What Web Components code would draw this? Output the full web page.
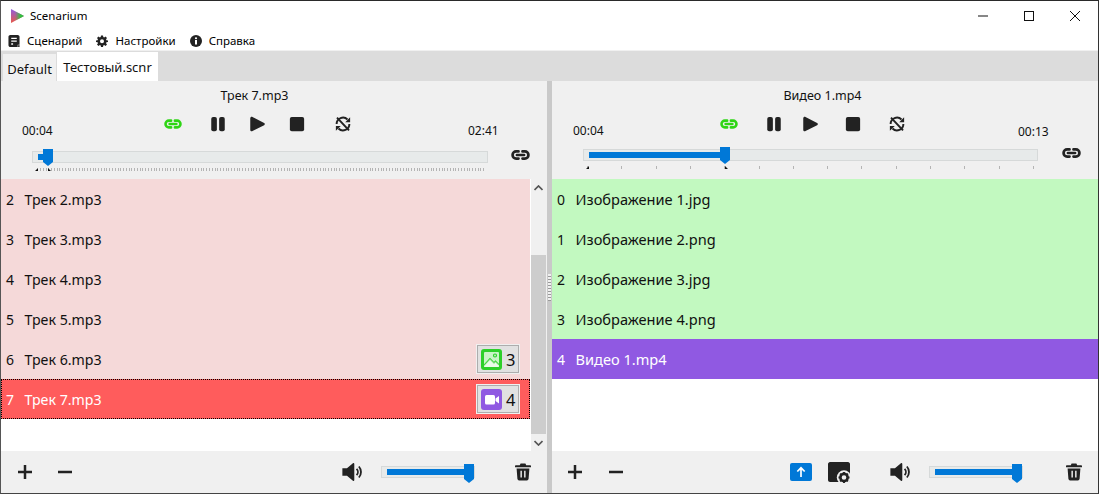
<!DOCTYPE html>
<html>
<head>
<meta charset="utf-8">
<title>Scenarium</title>
<style>
  html, body { margin: 0; height: 100%; overflow: hidden; }
  body { font-family: "Noto Sans", "Open Sans", sans-serif; color: #111; background: #f0f0f0; }
</style>
</head>
<body>
<app-window>
  <title-bar slot="title"></title-bar>
  <menu-bar slot="menu"></menu-bar>
  <tab-bar slot="tabs"></tab-bar>
  <media-panel slot="left" kind="audio"></media-panel>
  <media-panel slot="right" kind="video"></media-panel>
</app-window>

<script>
// shared icon set, 24x24 viewbox unless the markup says otherwise
const ICONS = {
  link: `<svg viewBox="0 0 24 24" fill="none" stroke="currentColor" stroke-width="3.4" stroke-linecap="round"><path d="M9.5 7.5H6.5a4.5 4.5 0 0 0 0 9h3M14.5 7.5H17.500a4.5 4.5 0 0 1 0 9h-3M7.5 12h9"/></svg>`,
  pause: `<svg viewBox="0 0 24 24" fill="currentColor"><rect x="3" y="2.5" width="7.5" height="19" rx="2.5"/><rect x="13.5" y="2.5" width="7.5" height="19" rx="2.5"/></svg>`,
  play: `<svg viewBox="0 0 24 24" fill="currentColor"><path d="M3 4.5C3 2.8 4.6 1.9 6 2.7L21.5 10.5C22.8 11.2 22.8 12.8 21.5 13.5L6 21.3C4.6 22.1 3 21.2 3 19.5Z"/></svg>`,
  stop: `<svg viewBox="0 0 24 24" fill="currentColor"><rect x="2.5" y="2.5" width="19" height="19" rx="2.5"/></svg>`,
  norepeat: `<svg viewBox="0 0 24 24" fill="none" stroke="currentColor"><path d="M3.5 12a8.500 8.500 0 0 1 14.500-6M20.500 12a8.500 8.500 0 0 1-14.500 6" stroke-width="2.600"/><path d="M21.500 3v6.500H15ZM2.500 21v-6.500H9Z" fill="currentColor" stroke="none"/><path d="M4 3.500l16 17" stroke-width="2.600"/></svg>`,
  plus: `<svg viewBox="0 0 14 14" fill="currentColor"><rect x="5.75" y="0" width="2.5" height="14"/><rect x="0" y="5.75" width="14" height="2.5"/></svg>`,
  minus: `<svg viewBox="0 0 14 14" fill="currentColor"><rect x="0" y="5.75" width="14" height="2.5"/></svg>`,
  speaker: `<svg viewBox="0 0 24 24" fill="currentColor"><path d="M1.5 8h5L13 2.5c.8-.6 1.500-.2 1.500.7v17.600c0 .9-.7 1.300-1.500.7L6.500 16h-5Z"/><path d="M17 8.500a5 5 0 0 1 0 7" fill="none" stroke="currentColor" stroke-width="2"/><path d="M19.500 6a9 9 0 0 1 0 12" fill="none" stroke="currentColor" stroke-width="2"/></svg>`,
  trash: `<svg viewBox="2 2 20 21" fill="currentColor"><path d="M9 2h6l1 2h5c.6 0 1 .4 1 1v1.500H2V5c0-.6.4-1 1-1h5Z"/><path fill-rule="evenodd" d="M4 8h16l-1 13c0 1-1 2-2 2H7c-1 0-2-1-2-2ZM8.800 11v8.500h1.800V11ZM13.400 11v8.500h1.800V11Z"/></svg>`,
  upload: `<svg viewBox="0 0 22 18"><rect width="22" height="18" rx="2" fill="#0078d7"/><path d="M11 14V5M7.300 8.500 11 4.800l3.700 3.700" fill="none" stroke="#fff" stroke-width="1.700"/></svg>`,
  folderCog: `<svg viewBox="0 0 24 23"><path d="M2 0h18c1 0 2 1 2 2v16c0 1-1 2-2 2H2c-1 0-2-1-2-2V2C0 1 1 0 2 0Z" fill="#222"/><circle cx="16" cy="15.500" r="7.200" fill="#f0f0f0"/><circle cx="16" cy="15.500" r="3.600" fill="none" stroke="#222" stroke-width="2.600"/><path d="M16 10v2M16 19v2M10.500 15.500h2M19.500 15.500h2M12.100 11.600l1.400 1.400M18.500 18l1.400 1.400M12.100 19.400l1.400-1.400M18.500 13l1.400-1.400" stroke="#222" stroke-width="1.900"/></svg>`,
  image: `<svg viewBox="0 0 21 21"><rect width="21" height="21" rx="3" fill="#2dcf2a"/><rect x="3" y="3" width="15" height="15" rx="1" fill="#c9f4c7"/><path d="M3 16.500 9 10l4 4 1.500-1.500 3.500 3.500" fill="none" stroke="#2dcf2a" stroke-width="1.600"/><path d="M3 18v-1.500L9 10l4 4 1.500-1.500 3.500 3.500V18Z" fill="#fff" opacity=".6"/><circle cx="14" cy="6.500" r="1.500" fill="none" stroke="#2dcf2a" stroke-width="1.200"/></svg>`,
  video: `<svg viewBox="0 0 21 21"><rect width="21" height="21" rx="3" fill="#9059e2"/><rect x="4" y="6" width="10" height="9.500" rx="1.500" fill="#fff"/><path d="M14.500 9.500 18 7v7.500L14.500 12Z" fill="#fff"/></svg>`,
  logo: `<svg viewBox="0 0 13 14"><defs><linearGradient id="lg" x1="0" y1="0" x2="0" y2="1"><stop offset="0" stop-color="#8f5be0"/><stop offset="1" stop-color="#e85a48"/></linearGradient><linearGradient id="lh" x1="0" y1="0" x2="1" y2="0"><stop offset=".3" stop-color="#2fc23e" stop-opacity="0"/><stop offset=".75" stop-color="#2fc23e"/></linearGradient></defs><path d="M0 0 13 7 0 14Z" fill="url(#lg)"/><path d="M0 0 13 7 0 14Z" fill="url(#lh)"/></svg>`,
  file: `<svg viewBox="0 0 12 13" fill="#222"><path fill-rule="evenodd" d="M2 0h8c1 0 2 .8 2 2v8.500h-2V13H2c-1 0-2-.8-2-2V2C0 .8 1 0 2 0ZM3 3v1.200h6V3ZM3 6v1.200h6V6ZM3 9v1.600h2V9Z"/><rect x="10.500" y="11" width="1.500" height="2"/></svg>`,
  cog: `<svg viewBox="0 0 24 24" fill="#222"><path fill-rule="evenodd" d="M10 1h4l.6 3.200 1.700.7L19 3l3 3-1.900 2.700.7 1.700L24 11v3l-3.200.6-.7 1.700L22 19l-3 3-2.700-1.900-1.700.7L14 24h-4l-.6-3.200-1.700-.7L5 22l-3-3 1.900-2.700-.7-1.700L0 14v-3l3.200-.6.700-1.700L2 6l3-3 2.700 1.900 1.700-.7ZM12 8.500a4 4 0 1 0 0 8 4 4 0 0 0 0-8Z"/></svg>`,
  info: `<svg viewBox="0 0 24 24"><circle cx="12" cy="12" r="12" fill="#222"/><rect x="10" y="10" width="4" height="9" fill="#fff"/><circle cx="12" cy="6.500" r="2.200" fill="#fff"/></svg>`
};

function defineEl(name, css, html) {
  customElements.define(name, class extends HTMLElement {
    constructor() {
      super();
      this.attachShadow({ mode: "open" });
    }
    connectedCallback() {
      const markup = typeof html === "function" ? html(this) : html;
      this.shadowRoot.innerHTML = `<style>${css}</style>${markup}`;
    }
  });
}

defineEl("app-window", `
  :host { display: grid; grid-template-rows: 29px 20px 31px 1fr; width: 1099px; height: 494px; box-sizing: border-box;
    border-top: 1px solid #2a2a2a; border-right: 1px solid #333; border-bottom: 1px solid #444; border-left: 1px solid #555; background: #f0f0f0; }
  .panes { display: grid; grid-template-columns: 546px 5px 1fr; min-height: 0; }
  .split { background: #c9c9c9; display: flex; align-items: center; justify-content: center; }
  .grip { width: 3px; height: 27px; background: repeating-linear-gradient(#f0f0f0 0 2px, #999 2px 3px); }
`, `
  <slot name="title"></slot><slot name="menu"></slot><slot name="tabs"></slot>
  <div class="panes"><slot name="left"></slot><div class="split"><div class="grip"></div></div><slot name="right"></slot></div>
`);

defineEl("title-bar", `
  :host { display: flex; align-items: center; background: #fff; height: 29px; font-size: 11.5px; padding-left: 10px; color: #000; }
  .logo { width: 13px; height: 14px; margin-right: 6px; display: flex; }
  .name { flex: 1; }
  .btn { width: 46px; height: 29px; display: flex; align-items: center; justify-content: center; }
`, () => `
  <span class="logo">${ICONS.logo}</span><span class="name">Scenarium</span>
  <span class="btn"><svg width="10" height="10"><rect x="0" y="4.500" width="10" height="1" fill="#111"/></svg></span>
  <span class="btn"><svg width="10" height="10"><rect x=".5" y=".5" width="9" height="9" fill="none" stroke="#111"/></svg></span>
  <span class="btn"><svg width="10" height="10"><path d="M0 0 10 10M10 0 0 10" stroke="#111" fill="none"/></svg></span>
`);

defineEl("menu-bar", `
  :host { display: flex; align-items: center; background: #fff; height: 20px; font-size: 11.5px; padding-left: 7px; gap: 14px; color: #000; box-sizing: border-box; padding-top: 1px; }
  .it { display: flex; align-items: center; gap: 7px; }
  .it:first-child { gap: 8px; }
  svg { width: 12px; height: 12px; display: block; }
`, () => `
  <span class="it">${ICONS.file}<span>Сценарий</span></span>
  <span class="it">${ICONS.cog}<span>Настройки</span></span>
  <span class="it">${ICONS.info}<span>Справка</span></span>
`);

defineEl("tab-bar", `
  :host { display: flex; align-items: flex-end; background: #dcdcdc; height: 30px; border-top: 1px solid #f0f0f0; padding-left: 2px; font-size: 13px; color: #111; }
  .tab { background: #f0f0f0; height: 27px; width: 53px; box-sizing: border-box; padding-top: 2px; display: flex; align-items: center; justify-content: center; margin-right: 1px; }
  .on { background: #fff; height: 29px; width: 101px; padding-top: 1px; }
`, `<div class="tab">Default</div><div class="tab on">Тестовый.scnr</div>`);

// the seek and volume sliders share this; the handle lies over the groove
defineEl("seek-slider", `
  :host { display: block; position: relative; height: 12px; flex: none; }
  .groove { position: absolute; inset: 0; box-sizing: border-box; background: #e7eaea; border: 1px solid #d6d9d9; }
  .fill { position: absolute; top: 3px; bottom: 3px; background: #0078d7; }
  svg.h { position: absolute; top: -2px; width: 10px; }
  svg.ticks { position: absolute; left: 0; top: 17px; height: 4px; width: 100%; overflow: visible; }
`, el => {
  const attr = n => +el.getAttribute(n) || 0;
  const pos = attr("pos");
  const from = attr("from");
  const w = attr("w");
  const step = attr("step");
  const hh = attr("hh") || 17;
  let ticks = "";
  if (step) {
    let lines = "";
    for (let x = attr("tick-start"); x <= attr("tick-end"); x += step) {
      lines += `<rect x="${Math.round(x)}" y="0" width="1" height="3" fill="#b4b4b4"/>`;
    }
    lines += `<path d="M${attr("mark-a")} 0v3h-3ZM${attr("mark-b")} 0v3h3Z" fill="#111"/>`;
    ticks = `<svg class="ticks" viewBox="0 0 ${w} 4" preserveAspectRatio="none">${lines}</svg>`;
  }
  return `<div class="groove"></div>
    <div class="fill" style="left:${from}px;width:${pos - from}px"></div>
    <svg class="h" style="left:${pos}px;height:${hh}px" viewBox="0 0 10 ${hh}"><path d="M0 0H10V${hh - 4}L5 ${hh} 0 ${hh - 4}Z" fill="#0078d7"/></svg>${ticks}`;
});

defineEl("play-controls", `
  :host { display: block; color: #222; font-size: 12px; }
  .title { height: 28px; display: flex; align-items: center; justify-content: center; font-size: 12.5px; color: #111; }
  .row { display: flex; height: 30px; }
  .time { width: 30px; padding-top: 14px; box-sizing: border-box; line-height: 16px; color: #111; }
  .btns { flex: 1; display: flex; align-items: center; justify-content: center; }
  .btns span { width: 18px; height: 18px; display: block; }
  .btns svg { display: block; width: 100%; height: 100%; }
  .link { color: #2ed515; }
`, el => {
  const gaps = el.getAttribute("gaps").split(",");
  return `
    <div class="title" style="width:${el.getAttribute("tw")}px">${el.getAttribute("heading")}</div>
    <div class="row" style="margin-left:21px;width:${el.getAttribute("rw")}px">
      <div class="time">${el.getAttribute("start")}</div>
      <div class="btns">
        <span class="link" style="margin:0 ${gaps[0]}px 0 ${el.getAttribute("push-right") || 0}px;width:20px">${ICONS.link}</span>
        <span style="margin-right:${gaps[1]}px">${ICONS.pause}</span>
        <span style="margin-right:${gaps[2]}px">${ICONS.play}</span>
        <span style="margin-right:${gaps[3]}px">${ICONS.stop}</span>
        <span style="margin-right:${el.getAttribute("push-left") || 0}px">${ICONS.norepeat}</span>
      </div>
      <div class="time" style="padding-top:${el.getAttribute("end-top") || 14}px">${el.getAttribute("end")}</div>
    </div>`;
});

defineEl("play-row", `
  :host { display: flex; height: 40px; align-items: center; box-sizing: border-box; font-size: var(--row-size); color: #111; padding-left: 5px; background: var(--bg); }
  :host([selected]) { color: #fff; }
  :host([focus-ring]) { outline: 1px dotted #000; outline-offset: -1px; }
  .n { width: 18.5px; font-size: 14px; }
  .name { flex: 1; }
`, el => `<span class="n">${el.getAttribute("n")}</span><span class="name">${el.getAttribute("name")}</span><slot></slot>`);

defineEl("link-badge", `
  :host { display: flex; align-items: center; width: 42px; height: 28px; box-sizing: border-box; background: #e1e1e1; border: 1px solid #adadad;
    outline: 1px solid #f0f0f0; margin-right: 11px; padding-left: 3px; font-size: 16.5px; color: #111; gap: 4px; }
  svg { width: 21px; height: 21px; display: block; }
`, el => `${ICONS[el.getAttribute("icon")]}<span>${el.getAttribute("count")}</span>`);

defineEl("media-panel", `
  :host { display: grid; grid-template-rows: 98px 272px 42px; min-width: 0; background: #f0f0f0; }
  .head { display: block; }
  .slider-row { display: flex; align-items: center; height: 12px; margin-left: 31px; }
  .unlink { width: 19px; height: 20px; color: #222; display: block; margin-bottom: 4px; flex: none; }
  .unlink svg { display: block; width: 100%; height: 100%; }
  .list { background: #fff; display: flex; min-height: 0; overflow: hidden; }
  .rows { flex: 1; min-width: 0; overflow: hidden; }
  .sb { width: 16px; margin-left: 1px; background: #f0f0f0; display: grid; grid-template-rows: 17px 59px 1fr 17px; justify-items: center; align-items: center; box-sizing: border-box; padding-right: 1px; }
  .thumb { background: #cdcdcd; width: 100%; height: 100%; }
  .sb svg { width: 9px; height: 6px; }
  .foot { display: flex; align-items: center; color: #222; }
  .foot span.i { display: block; flex: none; }
  .foot svg { display: block; width: 100%; height: 100%; }
`, el => {
  const audio = el.getAttribute("kind") === "audio";
  const head = audio
    ? `<play-controls heading="Трек 7.mp3" tw="507" rw="476" start="00:04" end="02:41" gaps="26,21,22,28" push-left="6"></play-controls>
       <div class="slider-row" style="margin-top:12px">
         <seek-slider style="width:456px" from="6" pos="11" w="456" step="2.77" tick-start="8" tick-end="452" mark-a="6" mark-b="16"></seek-slider>
         <span class="unlink" style="margin-left:23px">${ICONS.link}</span>
       </div>`
    : `<play-controls heading="Видео 1.mp4" tw="541" rw="475" start="00:04" end="00:13" gaps="26,18,25,26" push-right="4" end-top="15"></play-controls>
       <div class="slider-row" style="margin-top:10px">
         <seek-slider style="width:455px" from="6" pos="137" w="455" step="34.31" tick-start="4" tick-end="452" mark-a="6" mark-b="142"></seek-slider>
         <span class="unlink" style="margin-left:24px">${ICONS.link}</span>
       </div>`;
  const plain = (list, bg) => list
    .map(r => `<play-row style="--bg:${bg}" n="${r[0]}" name="${r[1]}"></play-row>`).join("");
  const rows = audio
    ? plain([["2", "Трек 2.mp3"], ["3", "Трек 3.mp3"], ["4", "Трек 4.mp3"], ["5", "Трек 5.mp3"]], "#f5d9d9")
      + `<play-row style="--bg:#f5d9d9" n="6" name="Трек 6.mp3"><link-badge icon="image" count="3"></link-badge></play-row>
         <play-row style="--bg:#ff5c5c" selected focus-ring n="7" name="Трек 7.mp3"><link-badge icon="video" count="4"></link-badge></play-row>`
    : plain([["0", "Изображение 1.jpg"], ["1", "Изображение 2.png"], ["2", "Изображение 3.jpg"], ["3", "Изображение 4.png"]], "#c2f9c0")
      + `<play-row style="--bg:#9059e2" selected n="4" name="Видео 1.mp4"></play-row>`;
  const sb = audio
    ? `<div class="sb"><svg viewBox="0 0 9 6"><path d="M.5 5 4.5 1 8.500 5" fill="none" stroke="#555" stroke-width="1.700"/></svg><div></div><div class="thumb"></div><svg viewBox="0 0 9 6"><path d="M.5 1 4.5 5 8.500 1" fill="none" stroke="#555" stroke-width="1.700"/></svg></div>`
    : "";
  const foot = audio
    ? `<span class="i" style="width:14px;height:14px;margin-left:17px">${ICONS.plus}</span>
       <span class="i" style="width:14px;height:14px;margin-left:26px">${ICONS.minus}</span>
       <span class="i" style="width:22px;height:22px;margin-left:269px">${ICONS.speaker}</span>
       <seek-slider style="width:94px;margin-left:18px" from="6" pos="83" w="94" hh="19"></seek-slider>
       <span class="i" style="width:16px;height:18px;margin-left:40px">${ICONS.trash}</span>`
    : `<span class="i" style="width:14px;height:14px;margin-left:16px">${ICONS.plus}</span>
       <span class="i" style="width:14px;height:14px;margin-left:27px">${ICONS.minus}</span>
       <span class="i" style="width:22px;height:18px;margin-left:167px">${ICONS.upload}</span>
       <span class="i" style="width:24px;height:23px;margin:3px 0 0 16px">${ICONS.folderCog}</span>
       <span class="i" style="width:22px;height:22px;margin-left:37px">${ICONS.speaker}</span>
       <seek-slider style="width:94px;margin-left:18px" from="6" pos="83" w="94" hh="19"></seek-slider>
       <span class="i" style="width:16px;height:18px;margin-left:43px">${ICONS.trash}</span>`;
  return `<div class="head">${head}</div>
    <div class="list" style="--row-size:${audio ? 14.2 : 14.6}px"><div class="rows">${rows}</div>${sb}</div>
    <div class="foot">${foot}</div>`;
});
</script>
</body>
</html>
